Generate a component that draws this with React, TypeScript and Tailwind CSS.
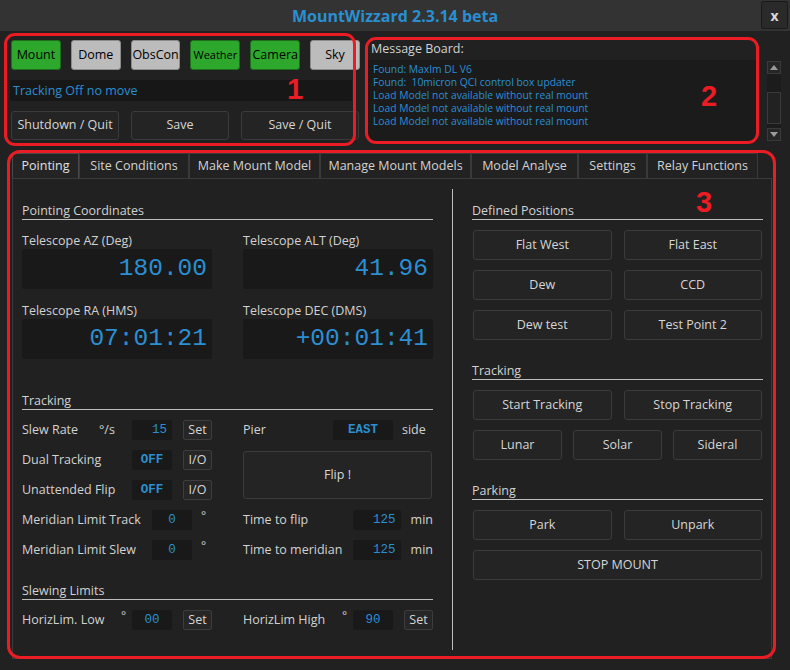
import type { ReactNode } from 'react'

const BLUE = 'text-[#2b8fd2]'

function DarkButton({ children, className = '' }: { children: ReactNode; className?: string }) {
  return (
    <button
      className={`flex items-center justify-center rounded-[3px] border border-[#3b3b3b] bg-[#242424] text-[12.5px] text-[#d6d6d6] ${className}`}
    >
      {children}
    </button>
  )
}

function StatusButton({ label, on, small }: { label: string; on: boolean; small?: boolean }) {
  return (
    <button
      className={`flex h-[30px] w-[50px] items-center justify-center rounded-[3px] border text-black ${
        small ? 'text-[11px]' : 'text-[12.5px]'
      } ${on ? 'border-[#1d6e1d] bg-[#2da82d]' : 'border-[#8c8c8c] bg-[#bcbcbc]'}`}
    >
      {label}
    </button>
  )
}

function SectionHeader({ title, className = '' }: { title: string; className?: string }) {
  return (
    <div className={`h-[17px] border-b border-[#bdbdbd] text-[12.5px] leading-[15px] text-[#d2d2d2] ${className}`}>
      {title}
    </div>
  )
}

function CoordBox({ label, value }: { label: string; value: string }) {
  return (
    <div className="flex w-[190px] flex-col">
      <div className="h-[16px] text-[12.5px] leading-[15px] text-[#d2d2d2]">{label}</div>
      <div
        className={`flex h-[40px] items-center justify-end rounded-[2px] bg-[#191919] pr-[5px] font-['Liberation_Mono',monospace] text-[24.5px] ${BLUE}`}
      >
        {value}
      </div>
    </div>
  )
}

function ValueBox({ value, w = 'w-[40px]', bold, center }: { value: string; w?: string; bold?: boolean; center?: boolean }) {
  return (
    <div
      className={`flex h-[20px] ${w} items-center ${center ? 'justify-center' : 'justify-end pr-[5px]'} rounded-[2px] bg-[#191919] font-['Liberation_Mono',monospace] text-[12.5px] ${
        bold ? 'font-bold' : ''
      } ${BLUE}`}
    >
      {value}
    </div>
  )
}

function SmallBtn({ children }: { children: ReactNode }) {
  return (
    <button className="flex h-[20px] w-[29px] items-center justify-center rounded-[2px] border border-[#3d3d3d] bg-[#262626] text-[12.5px] text-[#d6d6d6]">
      {children}
    </button>
  )
}

function Label({ children, w }: { children: ReactNode; w: string }) {
  return <div className={`${w} shrink-0 text-[12.5px] text-[#d2d2d2]`}>{children}</div>
}

function Deg({ className = '' }: { className?: string }) {
  return <span className={`-mt-[8px] text-[12px] text-[#d2d2d2] ${className}`}>°</span>
}

const tabs = [
  { t: 'Pointing', w: 'w-[67px]' },
  { t: 'Site Conditions', w: 'w-[110px]' },
  { t: 'Make Mount Model', w: 'w-[131px]' },
  { t: 'Manage Mount Models', w: 'w-[151px]' },
  { t: 'Model Analyse', w: 'w-[107px]' },
  { t: 'Settings', w: 'w-[69px]' },
  { t: 'Relay Functions', w: 'w-[111px]' },
]

const messages = [
  'Found: MaxIm DL V6',
  'Found:  10micron QCI control box updater',
  'Load Model not available without real mount',
  'Load Model not available without real mount',
  'Load Model not available without real mount',
]

export default function App() {
  return (
    <div className="relative h-[670px] w-[790px] overflow-hidden bg-[#212121] font-['Open_Sans',sans-serif]">
      {/* title bar */}
      <div className="relative flex h-[31px] items-center justify-center bg-[#333333]">
        <span className="text-[16px] font-bold text-[#2a8fd0]">MountWizzard 2.3.14 beta</span>
        <button className="absolute right-[2px] top-[1px] flex h-[28px] w-[27px] items-center justify-center rounded-[2px] border border-[#1a1a1a] bg-[#2a2a2a] text-[14px] font-bold text-[#d8d8d8]">
          x
        </button>
      </div>

      {/* top section */}
      <div className="flex h-[120px]">
        <div className="ml-[10px] mt-[9px] flex w-[350px] flex-col">
          <div className="flex gap-[10px] pl-[1px]">
            <StatusButton label="Mount" on />
            <StatusButton label="Dome" on={false} />
            <StatusButton label="ObsCon" on={false} />
            <StatusButton label="Weather" on small />
            <StatusButton label="Camera" on />
            <StatusButton label="Sky" on={false} />
          </div>
          <div className={`mt-[10px] flex h-[21px] w-[342px] items-center rounded-[2px] bg-[#171717] pl-[3px] pt-[2px] text-[12.5px] ${BLUE}`}>
            Tracking Off no move
          </div>
          <div className="mt-[10px] flex gap-[12px] pl-[1px]">
            <DarkButton className="h-[29px] w-[108px]">Shutdown / Quit</DarkButton>
            <DarkButton className="h-[29px] w-[98px]">Save</DarkButton>
            <DarkButton className="h-[29px] w-[118px]">Save / Quit</DarkButton>
          </div>
        </div>

        <div className="ml-[8px] mt-[9px] flex w-[390px] flex-col">
          <div className="h-[20px] pl-[3px] text-[12.5px] leading-[18px] text-[#d2d2d2]">Message Board:</div>
          <div className={`h-[81px] bg-[#1b1b1b] pl-[5px] pt-[3px] text-[10.3px] leading-[13px] ${BLUE}`}>
            {messages.map((m, i) => (
              <div key={i} className="whitespace-pre">
                {m}
              </div>
            ))}
          </div>
        </div>

        {/* scrollbar */}
        <div className="ml-[9px] mt-[30px] flex h-[80px] w-[14px] flex-col bg-[#1c1c1c]">
          <div className="flex h-[13px] items-center justify-center border border-[#3a3a3a] bg-[#262626]">
            <svg width="8" height="5" viewBox="0 0 8 5">
              <path d="M0 5 L4 0 L8 5 Z" fill="#9a9a9a" />
            </svg>
          </div>
          <div className="mt-[18px] h-[32px] border border-[#3a3a3a] bg-[#222222]" />
          <div className="mt-auto flex h-[13px] items-center justify-center border border-[#3a3a3a] bg-[#262626]">
            <svg width="8" height="5" viewBox="0 0 8 5">
              <path d="M0 0 L8 0 L4 5 Z" fill="#9a9a9a" />
            </svg>
          </div>
        </div>
      </div>

      {/* tabs */}
      <div className="ml-[12px] mt-[2px] flex h-[25px]">
        {tabs.map((tab, i) => (
          <div
            key={tab.t}
            className={`flex ${tab.w} items-center justify-center border border-b-0 text-[12.5px] ${
              i === 0 ? 'border-[#4a4a4a] bg-[#242424] text-[#e0e0e0]' : 'border-[#3a3a3a] bg-[#222222] text-[#d2d2d2]'
            }`}
          >
            {tab.t}
          </div>
        ))}
      </div>

      {/* tab panel */}
      <div className="ml-[12px] flex h-[481px] w-[760px] border border-[#3a3a3a] bg-[#212121]">
        {/* left column */}
        <div className="ml-[9px] mt-[24px] flex w-[411px] flex-col">
          <SectionHeader title="Pointing Coordinates" />
          <div className="mt-[13px] flex justify-between">
            <CoordBox label="Telescope AZ (Deg)" value="180.00" />
            <CoordBox label="Telescope ALT (Deg)" value="41.96" />
          </div>
          <div className="mt-[14px] flex justify-between">
            <CoordBox label="Telescope RA (HMS)" value="07:01:21" />
            <CoordBox label="Telescope DEC (DMS)" value="+00:01:41" />
          </div>

          <SectionHeader title="Tracking" className="mt-[34px]" />
          <div className="mt-[5px] grid grid-cols-[190px_190px] grid-rows-[repeat(5,30px)] justify-between">
            <div className="flex items-center">
              <Label w="w-[77px]">Slew Rate</Label>
              <Label w="w-[33px]">°/s</Label>
              <ValueBox value="15" />
              <div className="ml-[11px]">
                <SmallBtn>Set</SmallBtn>
              </div>
            </div>
            <div className="flex items-center">
              <Label w="w-[90px]">Pier</Label>
              <ValueBox value="EAST" w="w-[60px]" bold center />
              <span className="ml-[9px] text-[12.5px] text-[#d2d2d2]">side</span>
            </div>
            <div className="flex items-center">
              <Label w="w-[110px]">Dual Tracking</Label>
              <ValueBox value="OFF" bold center />
              <div className="ml-[11px]">
                <SmallBtn>I/O</SmallBtn>
              </div>
            </div>
            <div className="row-span-2 flex items-center">
              <DarkButton className="h-[48px] w-[189px]">Flip !</DarkButton>
            </div>
            <div className="flex items-center">
              <Label w="w-[110px]">Unattended Flip</Label>
              <ValueBox value="OFF" bold center />
              <div className="ml-[11px]">
                <SmallBtn>I/O</SmallBtn>
              </div>
            </div>
            <div className="flex items-center">
              <Label w="w-[130px]">Meridian Limit Track</Label>
              <ValueBox value="0" center />
              <Deg className="ml-[9px]" />
            </div>
            <div className="flex items-center">
              <Label w="w-[110px]">Time to flip</Label>
              <ValueBox value="125" w="w-[50px]" />
              <span className="ml-[10px] text-[12.5px] text-[#d2d2d2]">min</span>
            </div>
            <div className="flex items-center">
              <Label w="w-[130px]">Meridian Limit Slew</Label>
              <ValueBox value="0" center />
              <Deg className="ml-[9px]" />
            </div>
            <div className="flex items-center">
              <Label w="w-[110px]">Time to meridian</Label>
              <ValueBox value="125" w="w-[50px]" />
              <span className="ml-[10px] text-[12.5px] text-[#d2d2d2]">min</span>
            </div>
          </div>

          <SectionHeader title="Slewing Limits" className="mt-[18px]" />
          <div className="mt-[5px] flex h-[30px] justify-between">
            <div className="flex w-[190px] items-center">
              <Label w="w-[99px]">HorizLim. Low</Label>
              <Deg className="w-[11px]" />
              <ValueBox value="00" center />
              <div className="ml-[11px]">
                <SmallBtn>Set</SmallBtn>
              </div>
            </div>
            <div className="flex w-[190px] items-center">
              <Label w="w-[99px]">HorizLim High</Label>
              <Deg className="w-[11px]" />
              <ValueBox value="90" center />
              <div className="ml-[11px]">
                <SmallBtn>Set</SmallBtn>
              </div>
            </div>
          </div>
        </div>

        {/* separator */}
        <div className="ml-[19px] mt-[10px] h-[461px] w-px bg-[#bdbdbd]" />

        {/* right column */}
        <div className="ml-[19px] mt-[24px] flex w-[291px] flex-col">
          <SectionHeader title="Defined Positions" />
          <div className="mt-[10px] grid grid-cols-2 gap-x-[12px] gap-y-[10px] px-px">
            <DarkButton className="h-[30px]">Flat West</DarkButton>
            <DarkButton className="h-[30px]">Flat East</DarkButton>
            <DarkButton className="h-[30px]">Dew</DarkButton>
            <DarkButton className="h-[30px]">CCD</DarkButton>
            <DarkButton className="h-[30px]">Dew test</DarkButton>
            <DarkButton className="h-[30px]">Test Point 2</DarkButton>
          </div>

          <SectionHeader title="Tracking" className="mt-[23px]" />
          <div className="mt-[10px] grid grid-cols-2 gap-x-[12px] px-px">
            <DarkButton className="h-[30px]">Start Tracking</DarkButton>
            <DarkButton className="h-[30px]">Stop Tracking</DarkButton>
          </div>
          <div className="mt-[10px] grid grid-cols-3 gap-x-[11px] px-px">
            <DarkButton className="h-[30px]">Lunar</DarkButton>
            <DarkButton className="h-[30px]">Solar</DarkButton>
            <DarkButton className="h-[30px]">Sideral</DarkButton>
          </div>

          <SectionHeader title="Parking" className="mt-[23px]" />
          <div className="mt-[10px] grid grid-cols-2 gap-x-[12px] px-px">
            <DarkButton className="h-[30px]">Park</DarkButton>
            <DarkButton className="h-[30px]">Unpark</DarkButton>
          </div>
          <div className="mt-[10px] px-px">
            <DarkButton className="h-[30px] w-full">STOP MOUNT</DarkButton>
          </div>
        </div>
      </div>

      {/* red annotation overlays */}
      <div className="pointer-events-none absolute left-[4px] top-[33px] h-[113px] w-[352px] rounded-[11px] border-[3px] border-[#ec1c24]" />
      <div className="pointer-events-none absolute left-[365px] top-[37px] h-[107px] w-[394px] rounded-[11px] border-[3px] border-[#ec1c24]" />
      <div className="pointer-events-none absolute left-[7px] top-[150px] h-[509px] w-[769px] rounded-[13px] border-[3px] border-[#ec1c24]" />
      <div className="pointer-events-none absolute left-[287px] top-[68px] font-['Liberation_Sans',sans-serif] text-[29px] font-bold text-[#ec1c24]">1</div>
      <div className="pointer-events-none absolute left-[701px] top-[75px] font-['Liberation_Sans',sans-serif] text-[29px] font-bold text-[#ec1c24]">2</div>
      <div className="pointer-events-none absolute left-[696px] top-[181px] font-['Liberation_Sans',sans-serif] text-[29px] font-bold text-[#ec1c24]">3</div>
    </div>
  )
}
